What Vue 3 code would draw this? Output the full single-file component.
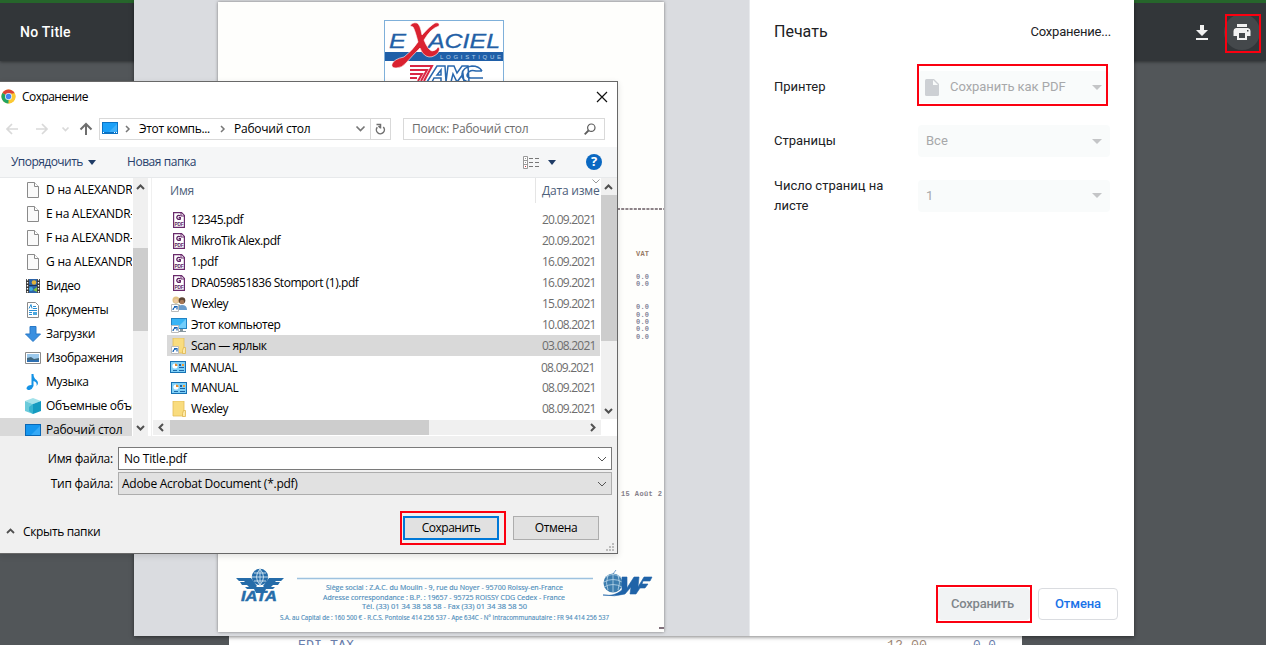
<script setup>
const places = [
  { name: 'D на ALEXANDR', icon: 'file', cls: 'caps' },
  { name: 'E на ALEXANDR-', icon: 'file', cls: 'caps' },
  { name: 'F на ALEXANDR-', icon: 'file', cls: 'caps' },
  { name: 'G на ALEXANDR', icon: 'file', cls: 'caps' },
  { name: 'Видео', icon: 'video' },
  { name: 'Документы', icon: 'docs' },
  { name: 'Загрузки', icon: 'down' },
  { name: 'Изображения', icon: 'image' },
  { name: 'Музыка', icon: 'music' },
  { name: 'Объемные объекты', icon: 'cube' },
  { name: 'Рабочий стол', icon: 'desktop', active: true },
]
const files = [
  { name: '12345.pdf', icon: 'pdf', date: '20.09.2021' },
  { name: 'MikroTik Alex.pdf', icon: 'pdf', date: '20.09.2021' },
  { name: '1.pdf', icon: 'pdf', date: '16.09.2021' },
  { name: 'DRA059851836 Stomport (1).pdf', icon: 'pdf', date: '16.09.2021' },
  { name: 'Wexley', icon: 'people', date: '15.09.2021' },
  { name: 'Этот компьютер', icon: 'pc', date: '10.08.2021' },
  { name: 'Scan — ярлык', icon: 'scan', date: '03.08.2021', active: true },
  { name: 'MANUAL', icon: 'manual', date: '08.09.2021', nudged: true },
  { name: 'MANUAL', icon: 'manual', date: '08.09.2021' },
  { name: 'Wexley', icon: 'folder', date: '08.09.2021' },
]
const vat = [279, 286, 309, 316.5, 324, 331, 339]
</script>

<template>
  <div class="screen">
    <header class="viewer-bar">
      <span class="doc-title">No Title</span>
      <svg class="dl" width="14" height="16" viewBox="0 0 14 16"><path d="M5 0h4v5h4L7 11 1 5h4zM1 13h12v2H1z" fill="#f1f1f1" /></svg>
      <div class="print-btn">
        <svg width="18" height="16" viewBox="0 0 18 16"><path d="M4 0h10v3H4zM3 4h12a3 3 0 0 1 2.500 3v5H14v4H4v-4H.5V7A3 3 0 0 1 3 4zM6 9v5h6V9zM14 6v1.500h1.500V6z" fill="#f1f1f1" fill-rule="evenodd" /></svg>
      </div>
    </header>

    <div class="under-page">
      <svg width="793" height="9" viewBox="229 636 793 9">
        <g font-family="Liberation Mono, monospace" font-size="13" fill="#6b7fae">
          <text x="298" y="649" textLength="56" lengthAdjust="spacingAndGlyphs">EDI TAX</text>
          <text x="887" y="649" textLength="40" lengthAdjust="spacingAndGlyphs" fill="#a08a78">12.00</text>
          <text x="973" y="649" textLength="23" lengthAdjust="spacingAndGlyphs">0.0</text>
        </g>
      </svg>
    </div>

    <section class="print-modal">
      <div class="preview">
        <div class="page">
          <svg width="446" height="630" viewBox="218 2 446 630">
            <rect x="384.500" y="20.500" width="119" height="80" fill="#fff" stroke="#7fb0da" />
            <rect x="385" y="52" width="118" height="9" fill="#1f5fa8" />
            <g font-family="Liberation Sans, sans-serif" font-style="italic" fill="#235fa6" stroke="#235fa6" stroke-width=".3">
              <text x="389" y="48" font-size="21" textLength="17" lengthAdjust="spacingAndGlyphs">E</text>
              <text x="428" y="48" font-size="21" textLength="72" lengthAdjust="spacingAndGlyphs">ACIEL</text>
            </g>
            <text x="440" y="59" font-family="Liberation Sans, sans-serif" font-size="6" fill="#b4cfe8" textLength="61">LOGISTIQUE</text>
            <path d="M410 26q2-4 7-3 3 1 5 12 8-9 13-12 5-1 4 3-8 2-15 14 4 10 8 11 4 0 6-4 3 1 0 6-6 6-12 3-4-2-6-8-8 8-14 15-4 5-10 5-5 0-4-4 2-5 12-7 8-6 14-15-3-12-5-15-2-1-3-1z" fill="#da2230" stroke="#fff" stroke-width=".6" />
            <g fill="none" stroke="#da2844" stroke-width="2"><path d="M410 66h22l-8 15M410 70h17l-6 11M410 74h12l-4 7M410 78h7" /></g>
            <g fill="none" stroke="#2968ae" stroke-width="1.500">
              <path d="M427 82l10-16h8l1 16h-5v-4h-7l-2 4zM437 75h4v-5zM446 82l2-16h6l3 7 5-7h6l1 16h-5l-1-8-6 8-4-8-2 8zM482 71q-3-5-10-5-9 1-10 8-1 7 8 8h12M482 71h-6q-7-2-9 4 0 3 4 3h12" />
            </g>
            <path d="M617 209h47" stroke="#8d8388" stroke-width="1.800" stroke-dasharray="3 1.200" />
            <g font-family="Liberation Mono, monospace">
              <text x="636" y="256" font-size="7" font-weight="bold" fill="#977a65" textLength="13">VAT</text>
              <text v-for="y in vat" :key="y" x="636" :y="y" font-size="7" font-weight="bold" fill="#85859a" textLength="13">0.0</text>
              <text x="621" y="496" font-size="7" font-weight="bold" fill="#857f8b" textLength="41">15 Août 2</text>
            </g>
            <g fill="#256ca9">
              <path d="M236 578h15l6 8-3 3h-7l-2-2 4 0-2-2h-5l-2-3h5l-1-1h-5zM284 578h-15l-6 8 3 3h7l2-2h-4l2-2h5l2-3h-5l1-1h5z" />
              <circle cx="260" cy="577" r="8.200" />
              <path d="M253 587h14l-3 6h-8z" />
              <text x="241" y="601" font-family="Liberation Sans, sans-serif" font-size="15" font-weight="bold" font-style="italic" textLength="36" lengthAdjust="spacingAndGlyphs" stroke="#256ca9" stroke-width=".5">IATA</text>
            </g>
            <path d="M252 577h16M254 573h12M254 581h12M260 569v16M260 569q-7 8 0 16M260 569q7 8 0 16" fill="none" stroke="#cfe4f2" stroke-width=".9" />
            <path d="M297 578.500h296" stroke="#9dc2df" stroke-width="1.500" />
            <g font-family="Open Sans, sans-serif" fill="#4d8dbb" stroke="#4d8dbb" stroke-width=".15">
              <text x="326" y="590" font-size="7" textLength="237" lengthAdjust="spacingAndGlyphs">Siège social : Z.A.C. du Moulin - 9, rue du Noyer - 95700 Roissy-en-France</text>
              <text x="323" y="599.500" font-size="7" textLength="242" lengthAdjust="spacingAndGlyphs">Adresse correspondance : B.P. : 19657 - 95725 ROISSY CDG Cedex - France</text>
              <text x="362" y="608.500" font-size="7" textLength="165" lengthAdjust="spacingAndGlyphs">Tél. (33) 01 34 38 58 58 - Fax (33) 01 34 38 58 50</text>
              <text x="280" y="619.500" font-size="6.500" textLength="329" lengthAdjust="spacingAndGlyphs">S.A. au Capital de : 160 500 € - R.C.S. Pontoise 414 256 537 - Ape 634C - N° Intracommunautaire : FR 94 414 256 537</text>
            </g>
            <circle cx="613" cy="583" r="9.500" fill="#3d7dae" />
            <path d="M606 577q7-5 14 0M604 582q9-5 18 0M604 587q9-5 18 0M608 575q-3 8 0 15M613 574v18M618 575q3 8 0 15" fill="none" stroke="#b9d6e8" stroke-width=".8" />
            <path d="M613 574l3-4M604 595q10 2 18-5l0-13h5v11l7-11h5l-1 10 6-10h8l-2 4h-7l-1 3h6l-3 4h-5l-4 6h-6l1-7-6 7q-10 3-22 1z" fill="#1f63a8" stroke="#1f63a8" stroke-width=".6" />
            <path d="M659 628h5" stroke="#493344" stroke-width="1.400" />
          </svg>
        </div>
      </div>
      <div class="settings">
        <div class="settings-head"><h1>Печать</h1><span>Сохранение...</span></div>
        <div class="setting">
          <label>Принтер</label>
          <div class="select printer">
            <svg width="14" height="17" viewBox="0 0 14 17"><path d="M1.500 0H9l5 5v10.500q0 1.500-1.500 1.500h-11Q0 17 0 15.500v-14Q0 0 1.500 0z" fill="#cdd0d4" /><path d="M8 1v5h5z" fill="#f9fbfb" /></svg>
            <span>Сохранить как PDF</span><i class="caret"></i>
          </div>
        </div>
        <div class="setting"><label>Страницы</label><div class="select"><span>Все</span><i class="caret"></i></div></div>
        <div class="setting last"><label>Число страниц на листе</label><div class="select"><span>1</span><i class="caret"></i></div></div>
        <div class="settings-actions"><button class="save">Сохранить</button><button class="cancel">Отмена</button></div>
      </div>
      <div class="mark printer-mark"></div>
      <div class="mark save-mark"></div>
    </section>
    <div class="mark toolbar-mark"></div>

    <section class="dialog">
      <div class="titlebar">
        <svg width="15" height="15" viewBox="0 0 15 15">
          <circle cx="7.500" cy="7.500" r="7" fill="#fbc934" />
          <path d="M7.500 7.500L1.400 4A7 7 0 0 1 13.600 4z" fill="#dc4437" />
          <path d="M7.500 7.500L1.400 4A7 7 0 0 0 7.500 14.500z" fill="#21a464" />
          <path d="M10.600 8.500L7.500 14.500A7 7 0 0 0 13.800 4.500H8z" fill="#fbc934" />
          <circle cx="7.500" cy="7.500" r="3.500" fill="#e9edf5" /><circle cx="7.500" cy="7.500" r="2.700" fill="#4285f4" />
        </svg>
        <span>Сохранение</span>
        <svg class="close" width="12" height="12" viewBox="0 0 12 12"><path d="M1 1l10 10M11 1L1 11" stroke="#111" stroke-width="1.200" /></svg>
      </div>
      <div class="navbar">
        <svg class="arrows" width="99" height="22" viewBox="0 0 99 22" fill="none">
          <g stroke="#d9d9d9" stroke-width="1.700"><path d="M18 11H7M12 6l-5 5 5 5M36 11h11M42 6l5 5-5 5" /><path d="M62.500 9.500l3 3 3-3" /></g>
          <path d="M86 17V6.500M80.500 11.500L86 6l5.500 5.500" stroke="#6e6e6e" stroke-width="2" />
        </svg>
        <div class="address">
          <svg class="desk" width="16" height="12" viewBox="0 0 16 12"><path d="M0 0h16v12H0z" fill="#0a72c4" /><path d="M1 1h14v9H1z" fill="#1ba0f8" /><path d="M7 10L15 2v8z" fill="#3eb0fa" /><path d="M1 10.500h1M12 10.500h1M14 10.500h1" stroke="#fff" /></svg>
          <svg class="sep" width="6" height="8" viewBox="0 0 6 8"><path d="M1 1l3 3-3 3" fill="none" stroke="#777" stroke-width="1.500" /></svg>
          <span class="crumb one">Этот компь...</span>
          <svg class="sep" width="6" height="8" viewBox="0 0 6 8"><path d="M1 1l3 3-3 3" fill="none" stroke="#777" stroke-width="1.500" /></svg>
          <span class="crumb">Рабочий стол</span>
          <svg class="drop" width="11" height="8" viewBox="0 0 11 8"><path d="M1.500 1.500l4 4 4-4" fill="none" stroke="#777" stroke-width="1.700" /></svg>
          <div class="refresh"><svg width="11" height="12" viewBox="0 0 11 12"><path d="M8.300 4A4 4 0 1 1 2.300 4.200M1.500 1.500H5.500V5.500M5.500 5l-2-2" fill="none" stroke="#707070" stroke-width="1.500" /></svg></div>
        </div>
        <div class="search"><span>Поиск: Рабочий стол</span><svg width="12" height="12" viewBox="0 0 12 12"><circle cx="7.300" cy="4.700" r="3.700" fill="none" stroke="#5d5d5d" stroke-width="1.200" /><path d="M4.500 7.500L.7 11.300" stroke="#5d5d5d" stroke-width="1.800" /></svg></div>
      </div>
      <div class="toolbar">
        <span class="sort">Упорядочить</span><i class="tri"></i><span class="newf">Новая папка</span>
        <svg class="view" width="17" height="13" viewBox="0 0 17 13"><path d="M.5.500h4v12h-4zM.5 4.500h4M.5 8.500h4" fill="#fff" stroke="#999" /><path d="M6 2.500h4M12 2.500h4M6 6.500h4M12 6.500h4M6 10.500h4M12 10.500h4" stroke="#777" /><path d="M2 2.500h1M2 6.500h1" stroke="#999" /><path d="M2 10.500h1" stroke="#c33" /></svg>
        <i class="tri second"></i>
        <span class="help">?</span>
      </div>
      <div class="body">
        <ul class="places">
          <li v-for="p in places" :key="p.name" :class="{ active: p.active }">
            <svg width="16" height="16" viewBox="0 0 16 16">
              <g v-if="p.icon === 'file'"><path d="M2.500.5h7l4 4v11h-11z" fill="#fafafa" stroke="#8a8a8a" /><path d="M9.500.5v4h4" fill="#fff" stroke="#8a8a8a" /></g>
              <g v-else-if="p.icon === 'video'"><path d="M1 1h14v14H1z" fill="#383838" /><path d="M4 1h8v14H4z" fill="#2c63a8" /><path d="M4 7h8v1H4z" fill="#17365e" /><circle cx="9" cy="4.500" r="2.300" fill="#e2b43b" /><circle cx="6" cy="11" r="2" fill="#3faddb" /><path d="M8 12l4-3v5z" fill="#7ec142" /><path d="M2.500 1v14M13.500 1v14" stroke="#fff" stroke-width="1.300" stroke-dasharray="1.500 1.500" /></g>
              <g v-else-if="p.icon === 'docs'"><path d="M2.500.5h8l3 3v12h-11z" fill="#fff" stroke="#8a8a8a" /><path d="M4 6.500l2-4 1 4M8 4.500h3M8 6.500h4M4 8.500h8M4 10.500h3M4 12.500h3" fill="none" stroke="#2b8fd4" /><path d="M8 10h4v3H8z" fill="#4ba8df" /></g>
              <path v-else-if="p.icon === 'down'" d="M5 .5h6V8h4.500L8 15.500.5 8H5z" fill="#398fe0" stroke="#2878c7" />
              <g v-else-if="p.icon === 'image'"><path d="M.5 2.500h15v11H.5z" fill="#fff" stroke="#8b8b8b" /><path d="M2 4h12v8H2z" fill="#9cc9ec" /><path d="M2 8l4-1 3 2 5-1v2H2z" fill="#42687e" /><path d="M2 10h12v2H2z" fill="#2e6fb0" /></g>
              <path v-else-if="p.icon === 'music'" d="M6.500 0h2q0 4 3 6 3 3 0 6 1-4-3-5v5q-1 3-4 4-3 0-3-2 1-3 5-3z" fill="#1593e6" />
              <g v-else-if="p.icon === 'cube'"><path d="M8 0l8 3-8 3-8-3z" fill="#a3e2ea" /><path d="M0 3l8 3v10l-8-3z" fill="#6bcbdb" /><path d="M16 3L8 6v10l8-3z" fill="#149bc0" /><path d="M8 6l-4 3v4l4 3z" fill="#37b3cf" /></g>
              <g v-else><path d="M0 2h16v13H0z" fill="#0967b5" /><path d="M1 3h14v10H1z" fill="#1596ee" /><path d="M6 13l9-9v9z" fill="#35a9f6" /></g>
            </svg>
            <span :class="p.cls">{{ p.name }}</span>
          </li>
        </ul>
        <div class="vbar nav-scroll">
          <svg width="15" height="17" viewBox="0 0 15 17"><path d="M4 11l3.500-3.500L11 11" fill="none" stroke="#505050" stroke-width="2" /></svg>
          <i></i>
          <svg class="end" width="15" height="17" viewBox="0 0 15 17"><path d="M4 7l3.500 3.500L11 7" fill="none" stroke="#505050" stroke-width="2" /></svg>
        </div>
        <div class="filepane">
          <div class="fileview">
            <div class="list">
              <div class="list-head"><span class="h-name">Имя</span><div class="h-date">Дата изменения<svg width="8" height="5" viewBox="0 0 8 5"><path d="M.5.500L4 4 7.500.500" fill="none" stroke="#999" /></svg></div></div>
              <div v-for="(f, i) in files" :key="i" class="file" :class="{ active: f.active, nudged: f.nudged }">
                <svg width="16" height="16" viewBox="0 0 16 16">
                  <g v-if="f.icon === 'pdf'"><path d="M2.600.6h8l2.800 2.800v12H2.600z" fill="#fff" stroke="#6a2a6c" stroke-width="1.200" /><path d="M10 .5v3.500h3.500" fill="none" stroke="#6a2a6c" /><path d="M9.500 3.800Q6 2.500 5.800 5.500 6 8 9.300 7.200V5.600H7.700" fill="none" stroke="#5c1d60" stroke-width="1.300" /><text x="3.600" y="14" font-family="Liberation Sans" font-size="5.500" font-weight="bold" textLength="9" lengthAdjust="spacingAndGlyphs" fill="#5c1d60">PDF</text></g>
                  <g v-else-if="f.icon === 'people'"><circle cx="5" cy="4" r="3.500" fill="#e2c284" /><circle cx="5" cy="5" r="2" fill="#eec9a4" /><path d="M1 9q4-3 8 0v4H1z" fill="#8ca184" /><circle cx="11" cy="4.500" r="3.300" fill="#5b4435" /><circle cx="11" cy="6" r="2.200" fill="#a77856" /><path d="M7 13q0-4 4-4 5 0 5 5H7z" fill="#6b9ccc" /></g>
                  <g v-else-if="f.icon === 'pc'"><path d="M0 1h16v11H0z" fill="#2183c4" /><path d="M1 2h14v9H1z" fill="#37b4f5" /><path d="M6 11l9-9v9z" fill="#72cdfb" /><path d="M9 12h3v2h3v1H7v-1h2z" fill="#86969f" /></g>
                  <g v-else-if="f.icon === 'scan' || f.icon === 'folder'"><path d="M2 0h11v15H2z" fill="#f9dc7e" stroke="#e3bd59" stroke-width=".8" /><path d="M12.500 9.500h2v6h-3v-3z" fill="#fdeaa9" stroke="#dfb64d" stroke-width=".8" /></g>
                  <g v-else><path d="M0 2h16v12H0z" fill="#1672b4" /><path d="M1 3h14v10H1z" fill="#7fd0f7" /><circle cx="5" cy="7" r="2.600" fill="#fff" /><path d="M5 7V4.400A2.600 2.600 0 0 1 7.600 7z" fill="#e58a2d" /><path d="M3 11.500h4" stroke="#1c69a8" /><path d="M9 5h2v2H9zM9 8h5v1H9zM9 11h5v1H9z" fill="#1a62a5" /><path d="M12 5h2v2h-2z" fill="#f49c35" /></g>
                  <g v-if="['people', 'pc', 'scan'].includes(f.icon)"><path d="M.5 8.500h7v7h-7z" fill="#fff" stroke="#bbb" /><path d="M2 14q0-2.500 3-3M3 10.500h3v3" fill="none" stroke="#1662b4" stroke-width="1.200" /></g>
                </svg>
                <span class="name">{{ f.name }}</span><span class="date">{{ f.date }}</span>
              </div>
            </div>
            <div class="vbar file-scroll">
              <svg width="16" height="17" viewBox="0 0 16 17"><path d="M4 11l3.500-3.500L11 11" fill="none" stroke="#505050" stroke-width="2" /></svg>
              <i></i>
              <svg class="end" width="16" height="17" viewBox="0 0 16 17"><path d="M4 7l3.500 3.500L11 7" fill="none" stroke="#505050" stroke-width="2" /></svg>
            </div>
          </div>
          <div class="hbar">
            <svg width="17" height="15" viewBox="0 0 17 15"><path d="M10 4L6.500 7.500 10 11" fill="none" stroke="#505050" stroke-width="2" /></svg>
            <i></i>
            <svg class="end" width="17" height="15" viewBox="0 0 17 15"><path d="M7 4l3.500 3.500L7 11" fill="none" stroke="#505050" stroke-width="2" /></svg>
          </div>
        </div>
      </div>
      <div class="form">
        <label>Имя файла:</label>
        <div class="field"><span>No Title.pdf</span><svg width="10" height="6" viewBox="0 0 10 6"><path d="M1 1l4 4 4-4" fill="none" stroke="#555" /></svg></div>
        <label>Тип файла:</label>
        <div class="field type"><span>Adobe Acrobat Document (*.pdf)</span><svg width="10" height="6" viewBox="0 0 10 6"><path d="M1 1l4 4 4-4" fill="none" stroke="#555" /></svg></div>
      </div>
      <div class="footer">
        <svg class="hide" width="9" height="6" viewBox="0 0 9 6"><path d="M1 5l3.500-3.500L8 5" fill="none" stroke="#505050" stroke-width="1.800" /></svg>
        <span class="hide-text">Скрыть папки</span>
        <button class="primary">Сохранить</button><button>Отмена</button>
      </div>
      <svg class="grip" width="8" height="8" viewBox="0 0 8 8"><path d="M6 0h2v2H6zM3 3h2v2H3zM6 3h2v2H6zM0 6h2v2H0zM3 6h2v2H3zM6 6h2v2H6z" fill="#bcbcbc" /></svg>
      <div class="mark dialog-mark"></div>
    </section>
  </div>
</template>

<style scoped>
* { box-sizing: border-box; }
.screen { position: relative; width: 1266px; height: 645px; overflow: hidden; background: #525659; font-family: "Open Sans", "Noto Sans", sans-serif; font-size: 12px; color: #000; white-space: nowrap; }
svg { display: block; flex: none; }
button { font: inherit; padding: 0; margin: 0; }
.mark { position: absolute; border: 2px solid #fb0010; }
.viewer-bar { display: flex; align-items: center; height: 61px; padding: 3px 6px 0 20px; background: #323639; border-top: 3px solid #26652b; box-shadow: 0 1px 3px rgba(0, 0, 0, .45); font-family: Roboto, sans-serif; }
.doc-title { flex: 1; color: #fff; font-size: 14px; font-weight: 500; letter-spacing: .25px; padding-bottom: 4px; }
.dl { margin: 0 15px 2px 0; }
.print-btn { display: grid; place-items: center; width: 36px; height: 36px; margin-bottom: 3px; border-radius: 50%; background: #44484b; }
.toolbar-mark { left: 1225px; top: 14px; width: 36px; height: 39px; }
.under-page { position: absolute; left: 229px; top: 636px; width: 793px; height: 9px; background: #fff; }
.print-modal { position: absolute; left: 134px; top: 0; width: 1000px; height: 636px; display: flex; background: #fff; box-shadow: 0 1px 4px rgba(0, 0, 0, .5); }
.preview { width: 616px; padding: 2px 0 0 84px; background: #dadce0; border-right: 1px solid #e8eaed; }
.page { width: 446px; height: 630px; background: #fefefc; box-shadow: 0 0 3px #777; }
.settings { display: flex; flex-direction: column; width: 384px; padding: 0 24px 16px; font-family: Roboto, "Noto Sans", sans-serif; font-size: 13px; color: #202124; }
.settings-head { display: flex; justify-content: space-between; align-items: center; height: 64px; margin-bottom: -4px; padding-bottom: 1px; }
.settings-head h1 { margin: 0; font-size: 16px; font-weight: 400; letter-spacing: 0; }
.settings-head span { color: #202124; letter-spacing: -.2px; margin-right: -1px; }
.setting { display: flex; align-items: center; justify-content: space-between; height: 54px; }
.setting.last { height: 55px; }
.setting label { width: 130px; white-space: normal; line-height: 20px; }
.select { display: flex; align-items: center; width: 192px; height: 32px; padding: 0 8px; border-radius: 4px; background: #f9fbfb; color: #a7a8aa; }
.select span { flex: 1; padding-bottom: 1px; }
.select.printer { padding-left: 7px; }
.printer span { margin-left: 11px; letter-spacing: -.05px; }
.caret { width: 0; border: 5px solid transparent; border-top-color: #c4c5c7; border-bottom: 0; }
.settings-actions { margin-top: auto; display: flex; justify-content: flex-end; gap: 8px; font-weight: 500; }
.settings-actions button { height: 32px; padding-bottom: 2px; border-radius: 4px; }
.settings-actions .save { width: 92px; padding-right: 3px; background: #f1f3f4; color: #80868b; border: 0; letter-spacing: -.25px; }
.settings-actions .cancel { width: 80px; margin-right: -8px; background: #fff; color: #1a73e8; border: 1px solid #dadce0; letter-spacing: -.1px; }
.printer-mark { left: 783px; top: 64px; width: 191px; height: 42px; }
.save-mark { left: 802px; top: 585px; width: 96px; height: 38px; }
.dialog { position: absolute; left: -1px; top: 81px; width: 619px; height: 473px; border: 1px solid #686868; background: #fff; box-shadow: 0 2px 6px rgba(0, 0, 0, .12); letter-spacing: -.2px; }
.titlebar { display: flex; align-items: center; height: 29px; padding: 0 9px 0 1px; }
.titlebar span { margin-left: 6px; letter-spacing: -.55px; }
.close { margin-left: auto; }
.navbar { display: flex; height: 36px; padding-top: 7px; }
.arrows { width: 99px; }
.address { display: flex; align-items: center; width: 292px; height: 22px; border: 1px solid #d9d9d9; }
.desk { margin: 0 7px 2px 2px; }
.sep { margin-right: 8px; }
.crumb { letter-spacing: -.25px; padding-bottom: 1px; }
.crumb.one { width: 81px; letter-spacing: -.35px; }
.drop { margin-left: auto; margin-right: 4px; }
.refresh { display: grid; place-items: center; width: 20px; height: 20px; border-left: 1px solid #d9d9d9; }
.search { display: flex; align-items: center; justify-content: space-between; width: 202px; height: 22px; margin-left: 12px; padding: 0 8px; border: 1px solid #d9d9d9; color: #6d6d6d; }
.search span { padding-bottom: 1px; letter-spacing: -.25px; }
.toolbar { display: flex; align-items: center; height: 31px; padding-left: 11px; background: #f5f6f7; border-bottom: 1px solid #e7e9eb; color: #27406b; }
.toolbar span { padding-bottom: 1px; }
.sort { width: 77px; letter-spacing: -.55px; }
.tri { width: 0; border: 4px solid transparent; border-top: 5px solid #1f3c66; border-bottom: 0; }
.newf { margin-left: 31px; letter-spacing: -.45px; }
.view { margin-left: auto; margin-right: 8px; }
.second { margin-right: 30px; }
.help { display: grid; place-items: center; width: 16px; height: 16px; margin-right: 15px; border-radius: 50%; background: #0a68c2; color: #fff; font-size: 13px; font-weight: 700; line-height: 15px; }
.body { display: flex; height: 258px; overflow: hidden; }
.places { width: 133px; height: 258px; margin: 0; padding: 0; list-style: none; overflow: hidden; }
.places li { display: flex; align-items: center; width: 132px; height: 24px; padding-left: 25px; gap: 5px; overflow: hidden; letter-spacing: -.35px; }
.places span { padding-bottom: 2px; }
.places .caps { letter-spacing: -.22px; }
.places li.active { background: #d9d9d9; letter-spacing: -.25px; }
.vbar { display: flex; flex-direction: column; background: #f0f0f0; }
.vbar .end { margin-top: auto; }
.vbar i, .hbar i { display: block; background: #cdcdcd; }
.nav-scroll { width: 15px; height: 258px; }
.nav-scroll i { height: 83px; margin-top: 53px; }
.filepane { width: 466px; margin-left: 3px; border-left: 1px solid #f0f0f0; }
.fileview { display: flex; height: 241px; }
.list { width: 449px; overflow: hidden; }
.list-head { display: flex; height: 31px; color: #4c607a; }
.h-name { flex: none; width: 383px; padding: 4px 0 0 18px; }
.h-date { flex: none; position: relative; width: 65px; height: 25px; padding: 4px 0 0 6px; border-left: 1px solid #e5e5e5; overflow: hidden; }
.h-date svg { position: absolute; left: 56px; top: 1px; }
.file { display: flex; align-items: center; width: 433px; height: 21px; margin-left: 15px; padding-left: 4px; }
.file.nudged { padding: 1px 0 0 3px; }
.file.active { background: #d9d9d9; }
.name { width: 351px; margin-left: 4px; letter-spacing: -.45px; }
.date { color: #6d6d6d; letter-spacing: -.75px; }
.file-scroll { width: 16px; }
.file-scroll i { height: 146px; }
.hbar { display: flex; width: 448px; height: 15px; margin: 1px 0 0 1px; background: #f0f0f0; }
.hbar i { width: 259px; }
.hbar .end { margin-left: auto; }
.form { display: grid; grid-template-columns: 113px 494px; column-gap: 5px; row-gap: 2px; height: 60px; padding-top: 11px; grid-auto-rows: 23px; background: #f0f0f0; align-items: center; }
.form label { text-align: right; }
.field { display: flex; align-items: center; justify-content: space-between; height: 23px; padding: 0 4px 0 5px; border: 1px solid #7a7a7a; background: #fff; }
.field span { padding-bottom: 1px; }
.field.type { padding-left: 3px; background: #e1e1e1; border-color: #adadad; letter-spacing: -.26px; }
.footer { display: flex; align-items: flex-start; height: 57px; padding: 20px 18px 0 6px; background: #f0f0f0; }
.hide { margin-top: 12px; }
.hide-text { flex: 1; margin: 7px 0 0 8px; letter-spacing: -.35px; }
.footer button { width: 86px; height: 24px; padding-bottom: 1px; border: 1px solid #adadad; background: #e1e1e1; letter-spacing: -.4px; }
.footer .primary { width: 96px; margin-right: 14px; border: 2px solid #0078d7; letter-spacing: -.5px; }
.grip { position: absolute; right: 3px; bottom: 2px; }
.dialog-mark { left: 400px; top: 429px; width: 106px; height: 34px; }
</style>
